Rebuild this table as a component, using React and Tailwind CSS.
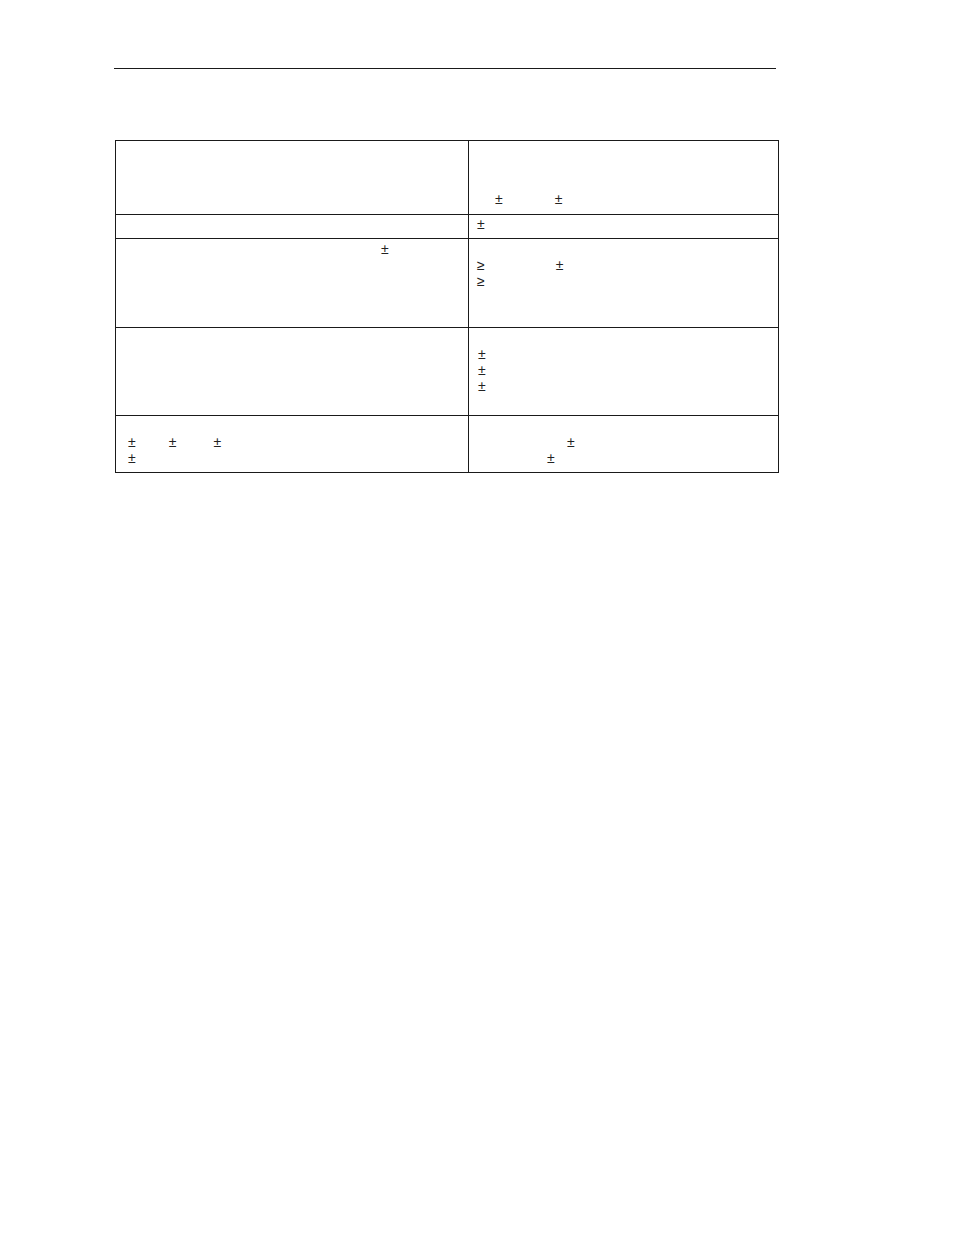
export default function App() {
  const font = { fontFamily: '"Liberation Sans", Arial, sans-serif' };
  return (
    <div className="min-h-[1235px] w-[954px] bg-white pt-[68px] text-[14px] leading-[16px] text-[#222]" style={font}>
      <div className="ml-[114px] h-px w-[662px] bg-[#1a1a1a]" />
      <div className="ml-[115px] mt-[71px] w-[664px] border-t border-l border-r border-[#1a1a1a]">
        {/* Row 1 */}
        <div className="flex h-[74px] border-b border-[#1a1a1a]">
          <div className="w-[353px] border-r border-[#1a1a1a] pl-[12px] pt-[2px]" />
          <div className="flex-1 pl-[8px] pt-[2px]">
            <div className="h-[16px]" />
            <div className="h-[16px]" />
            <div className="h-[16px]" />
            <div className="h-[16px] whitespace-nowrap">
              <span className="ml-[18px]">±</span>
              <span className="ml-[52px]">±</span>
            </div>
          </div>
        </div>
        {/* Row 2 */}
        <div className="flex h-[24px] border-b border-[#1a1a1a]">
          <div className="w-[353px] border-r border-[#1a1a1a] pl-[12px] pt-[1px]" />
          <div className="flex-1 pl-[8px] pt-[1px]">
            <div className="h-[16px]">±</div>
          </div>
        </div>
        {/* Row 3 */}
        <div className="flex h-[89px] border-b border-[#1a1a1a]">
          <div className="w-[353px] border-r border-[#1a1a1a] pl-[12px] pt-[2px]">
            <div className="h-[16px] whitespace-nowrap">
              <span className="ml-[253px]">±</span>
            </div>
          </div>
          <div className="flex-1 pl-[8px] pt-[2px]">
            <div className="h-[16px]" />
            <div className="h-[16px] whitespace-nowrap">
              <span>≥</span>
              <span className="ml-[71px]">±</span>
            </div>
            <div className="h-[16px]">≥</div>
          </div>
        </div>
        {/* Row 4 */}
        <div className="flex h-[88px] border-b border-[#1a1a1a]">
          <div className="w-[353px] border-r border-[#1a1a1a] pl-[12px] pt-[2px]" />
          <div className="flex-1 pl-[9px] pt-[2px]">
            <div className="h-[16px]" />
            <div className="h-[16px]">±</div>
            <div className="h-[16px]">±</div>
            <div className="h-[16px]">±</div>
          </div>
        </div>
        {/* Row 5 */}
        <div className="flex h-[57px] border-b border-[#1a1a1a]">
          <div className="w-[353px] border-r border-[#1a1a1a] pl-[12px] pt-[2px]">
            <div className="h-[16px]" />
            <div className="h-[16px] whitespace-nowrap">
              <span>±</span>
              <span className="ml-[33px]">±</span>
              <span className="ml-[37px]">±</span>
            </div>
            <div className="h-[16px]">±</div>
          </div>
          <div className="flex-1 pl-[8px] pt-[2px]">
            <div className="h-[16px]" />
            <div className="h-[16px] whitespace-nowrap">
              <span className="ml-[90px]">±</span>
            </div>
            <div className="h-[16px] whitespace-nowrap">
              <span className="ml-[70px]">±</span>
            </div>
          </div>
        </div>
      </div>
    </div>
  );
}
